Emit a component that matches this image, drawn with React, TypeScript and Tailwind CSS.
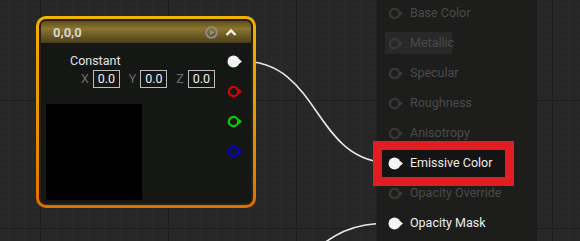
const font = { fontFamily: 'Roboto, "Liberation Sans", sans-serif' };

const RingPin = ({ color, filled = false }: { color: string; filled?: boolean }) => (
  <svg width="16" height="13" viewBox="0 0 16 13" className="block">
    {filled ? (
      <circle cx="6.5" cy="6.5" r="6" fill={color} />
    ) : (
      <circle cx="6.5" cy="6.5" r="4.7" fill="none" stroke={color} strokeWidth="2.2" />
    )}
    <polygon points="12,4 15,6.5 12,9" fill={color} />
  </svg>
);

const inputs = ['X', 'Y', 'Z'];

const panelRows = [
  { label: 'Base Color' },
  { label: 'Metallic', hover: true },
  { label: 'Specular' },
  { label: 'Roughness' },
  { label: 'Anisotropy' },
  { label: 'Emissive Color', active: true, boxed: true },
  { label: 'Opacity Override' },
  { label: 'Opacity Mask', active: true },
];

export default function App() {
  return (
    <div
      className="relative w-[580px] h-[241px] overflow-hidden bg-[#272727] bg-[linear-gradient(90deg,#1e1e1e_1px,transparent_1px),linear-gradient(180deg,#1e1e1e_1px,transparent_1px),linear-gradient(90deg,#2b2b2b_1px,transparent_1px),linear-gradient(180deg,#2b2b2b_1px,transparent_1px)] [background-size:128px_128px,128px_128px,16px_16px,16px_16px] [background-position:40px_100px,40px_100px,8px_4px,8px_4px]"
      style={font}
    >
      {/* wires */}
      <svg className="absolute inset-0" width="580" height="241">
        <path d="M241,61 C322,61 312,163 392,163" fill="none" stroke="#e6e6e6" strokeWidth="1.6" />
        <path d="M392,223 C352,223 335,232 300,262" fill="none" stroke="#e6e6e6" strokeWidth="1.6" />
      </svg>

      {/* Constant3Vector node */}
      <div className="absolute left-[36px] top-[16px] w-[220px] h-[192px] rounded-[10px] p-[3px] bg-[linear-gradient(180deg,#f2b200,#e99400_55%,#dd7000)]">
        <div className="flex flex-col h-full rounded-[7px] bg-[#261f12] p-[2px]">
          <div className="flex items-center h-[22px] px-[12px] rounded-t-[5px] bg-[linear-gradient(180deg,#5e4e1c,#8c7530_35%,#6a5822_70%,#4a3f1c)]">
            <span className="text-[13px] font-bold text-[#d4d4d4] leading-none">0,0,0</span>
            <div className="ml-auto flex items-center gap-[7px] mr-[2px]">
              <svg width="13" height="13" viewBox="0 0 13 13">
                <circle cx="6.5" cy="6.5" r="5.3" fill="none" stroke="#8f8f8f" strokeWidth="1.8" />
                <polygon points="5,3.8 9.2,6.5 5,9.2" fill="#8f8f8f" />
              </svg>
              <svg width="12" height="9" viewBox="0 0 12 9">
                <polyline points="1.5,7 6,2.5 10.5,7" fill="none" stroke="#f2f2f2" strokeWidth="2.4" />
              </svg>
            </div>
          </div>

          <div className="flex flex-1 rounded-b-[5px] bg-[#151715]">
            <div className="flex flex-col pl-[5px]">
              <div className="ml-[24px] mt-[10px] text-[12.5px] leading-[16px] text-[#e4e4e4]">Constant</div>
              <div className="flex items-center ml-[35px] mt-[1px]">
                {inputs.map((axis, i) => (
                  <div key={axis} className={`flex items-center ${i > 0 ? 'ml-[9px]' : ''}`}>
                    <span className="text-[12.5px] text-[#6c6c6c] leading-none">{axis}</span>
                    <span className="ml-[4px] flex items-center justify-center w-[27px] h-[18px] border border-[#bdbdbd] text-[12.5px] leading-none text-[#f0f0f0]">
                      0.0
                    </span>
                  </div>
                ))}
              </div>
              <div className="mt-[16px] w-[96px] h-[96px] bg-black" />
            </div>

            <div className="ml-auto mr-[8.5px] flex flex-col pt-[11.5px] gap-[17px]">
              <RingPin color="#f2f2f2" filled />
              <RingPin color="#e00000" />
              <RingPin color="#00d400" />
              <RingPin color="#0000e6" />
            </div>
          </div>
        </div>
      </div>

      {/* Material output node */}
      <div className="absolute left-[376px] top-[-2px] w-[161px] h-[250px] bg-[#1d1d1c] border-l border-[#222]">
        {panelRows.map((row) => (
          <div key={row.label} className="relative flex items-center h-[30px]">
            {row.hover && <div className="absolute left-[8px] top-[4px] w-[67px] h-[22px] bg-[#282828]" />}
            {row.boxed && (
              <div className="absolute left-[-4px] top-[-7px] w-[141px] h-[45px] border-[9px] border-[#e21d22] bg-[#141414]" />
            )}
            <div className="relative flex items-center ml-[10.5px]">
              <RingPin color={row.active ? '#f4f4f4' : '#383838'} filled={row.active} />
              <span
                className={`ml-[6.5px] text-[12.5px] leading-none ${row.active ? 'text-[#ececec]' : 'text-[#4a4a4a]'}`}
              >
                {row.label}
              </span>
            </div>
          </div>
        ))}
      </div>
    </div>
  );
}
